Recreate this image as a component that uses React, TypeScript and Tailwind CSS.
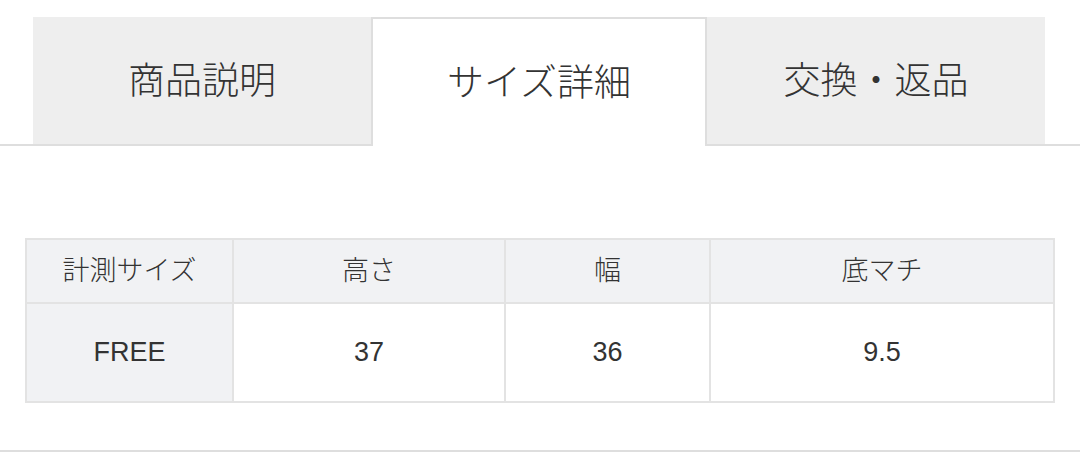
import React, { useState } from 'react';

const tabs = ['商品説明', 'サイズ詳細', '交換・返品'];

const headers = ['計測サイズ', '高さ', '幅', '底マチ'];
const row = ['FREE', '37', '36', '9.5'];
const colWidths = ['w-[207px]', 'w-[272px]', 'w-[205px]', 'w-[344px]'];

export default function App() {
  const [active, setActive] = useState(1);

  return (
    <div
      className="w-[1080px] h-[452px] bg-white text-[#333] overflow-hidden"
      style={{ fontFamily: '"Liberation Sans", "Noto Sans CJK JP", sans-serif' }}
    >
      {/* Tabs */}
      <div className="pt-[17px] px-[33px] border-b-2 border-[#dedede]">
        <div className="grid grid-cols-[338px_336px_338px]">
          {tabs.map((t, i) => (
            <button
              key={t}
              onClick={() => setActive(i)}
              className={
                i === active
                  ? 'h-[129px] -mb-[2px] pt-[3px] bg-white border-2 border-b-0 border-[#dedede] text-[37px] font-light text-[#333] flex items-center justify-center'
                  : 'h-[127px] pt-[3px] bg-[#eeeeee] text-[37px] font-light text-[#333] flex items-center justify-center'
              }
            >
              {t}
            </button>
          ))}
        </div>
      </div>

      {/* Size table */}
      <div className="pt-[92px] pl-[25px] h-[306px] border-b-2 border-[#dedede]">
        <table className="table-fixed border-collapse w-[1028px] text-[27px]">
          <colgroup>
            {colWidths.map((w) => (
              <col key={w} className={w} />
            ))}
          </colgroup>
          <thead>
            <tr className="h-[64px] bg-[#f1f2f4]">
              {headers.map((h) => (
                <th key={h} className="border-2 border-[#e3e3e3] font-light text-center">
                  {h}
                </th>
              ))}
            </tr>
          </thead>
          <tbody>
            <tr className="h-[99px]">
              {row.map((c, i) => (
                <td
                  key={i}
                  className={
                    i === 0
                      ? 'border-2 border-[#e3e3e3] bg-[#f1f2f4] text-center'
                      : 'border-2 border-[#e3e3e3] bg-white text-center'
                  }
                >
                  {c}
                </td>
              ))}
            </tr>
          </tbody>
        </table>
      </div>
    </div>
  );
}
